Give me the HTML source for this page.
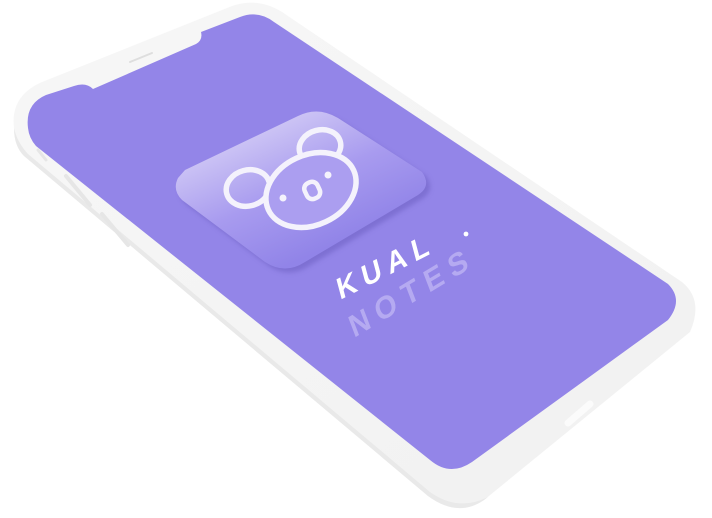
<!DOCTYPE html>
<html><head><meta charset="utf-8"><style>
html,body{margin:0;padding:0;background:#fff;width:712px;height:518px;overflow:hidden}
svg{display:block}
</style></head><body>
<svg width="712" height="518" viewBox="0 0 712 518" xmlns="http://www.w3.org/2000/svg">
<defs>
<linearGradient id="ph" x1="0" y1="0" x2="1" y2="1">
<stop offset="0" stop-color="#f7f7f7"/><stop offset="1" stop-color="#f1f1f1"/>
</linearGradient>
<linearGradient id="ic" x1="0.2" y1="0.1" x2="0.7" y2="0.8">
<stop offset="0" stop-color="#d6cff6"/><stop offset="0.55" stop-color="#a89bef"/><stop offset="1" stop-color="#9184e8"/>
</linearGradient>
<filter id="sh" x="-20%" y="-20%" width="140%" height="140%"><feGaussianBlur stdDeviation="2.5"/></filter>
</defs>
<path d="M14 128 Q10 96 42 82 L232 6 Q258 -3 282 12 L682 282 Q704 300 690 332 L484 500 Q458 518 428 496 L24 156 Q14 146 14 128 Z" fill="url(#ph)"/>
<path d="M14 128 Q14 146 24 156 L428 496 Q458 518 484 500 L488 497 Q458 512 430 492 L28 154 Q17 142 14 128 Z" fill="#e9e9e9"/>
<path d="M38 150 L46 160" stroke="#e6e6e6" stroke-width="3" stroke-linecap="round"/>
<path d="M66 176 L90 205" stroke="#e6e6e6" stroke-width="4" stroke-linecap="round"/>
<path d="M102 214 L128 245" stroke="#e6e6e6" stroke-width="4" stroke-linecap="round"/>
<path d="M568 423 L590 404" stroke="#fbfbfb" stroke-width="7" stroke-linecap="round"/>
<path d="M28 128 Q25 104 46 95 L74 86 Q86 82 93 89 L196 44 Q203 40 201 32 L240 17 Q258 10 274 22 L668 284 Q684 300 668 320 L472 462 Q450 477 430 460 L36 146 Q29 138 28 128 Z" fill="#9385e8"/>
<path d="M130 62 L152 53" stroke="#dedede" stroke-width="2" stroke-linecap="round"/>
<path d="M178 178 Q172 190 182 200 L265 262 Q285 275 305 262 L418 195 Q432 186 422 172 L338 118 Q318 106 298 116 L185 170 Z" fill="#6f62c4" opacity="0.6" filter="url(#sh)" transform="translate(4,4)"/>
<path d="M178 178 Q172 190 182 200 L265 262 Q285 275 305 262 L418 195 Q432 186 422 172 L338 118 Q318 106 298 116 L185 170 Z" fill="url(#ic)"/>
<g stroke="#f4f2fc" stroke-width="5.5" stroke-linecap="round">
<ellipse cx="248" cy="188" rx="22" ry="18" transform="rotate(-15 248 188)" fill="none"/>
<ellipse cx="320" cy="147" rx="21" ry="17" transform="rotate(-15 320 147)" fill="none"/>
<ellipse cx="311" cy="190" rx="47" ry="35" transform="rotate(-25 311 190)" fill="#ab9ef0"/>
</g>
<rect x="305" y="182" width="14" height="17" rx="6" fill="none" stroke="#f4f2fc" stroke-width="4.5" transform="rotate(-25 312 190)"/>
<circle cx="283" cy="198" r="3.5" fill="#f4f2fc"/>
<circle cx="328" cy="175" r="3.5" fill="#f4f2fc"/>
<text x="0" y="0" font-family="Liberation Sans, sans-serif" font-weight="bold" font-size="29" fill="#ffffff" letter-spacing="7" transform="translate(340,300) rotate(-27) skewX(-12)">KUAL</text>
<circle cx="466" cy="234" r="2.4" fill="#fff"/>
<text x="0" y="0" font-family="Liberation Sans, sans-serif" font-weight="bold" font-size="30" fill="#b5aaf1" letter-spacing="8" transform="translate(354,338) rotate(-31) skewX(-10)">NOTES</text>
</svg>
</body></html>
